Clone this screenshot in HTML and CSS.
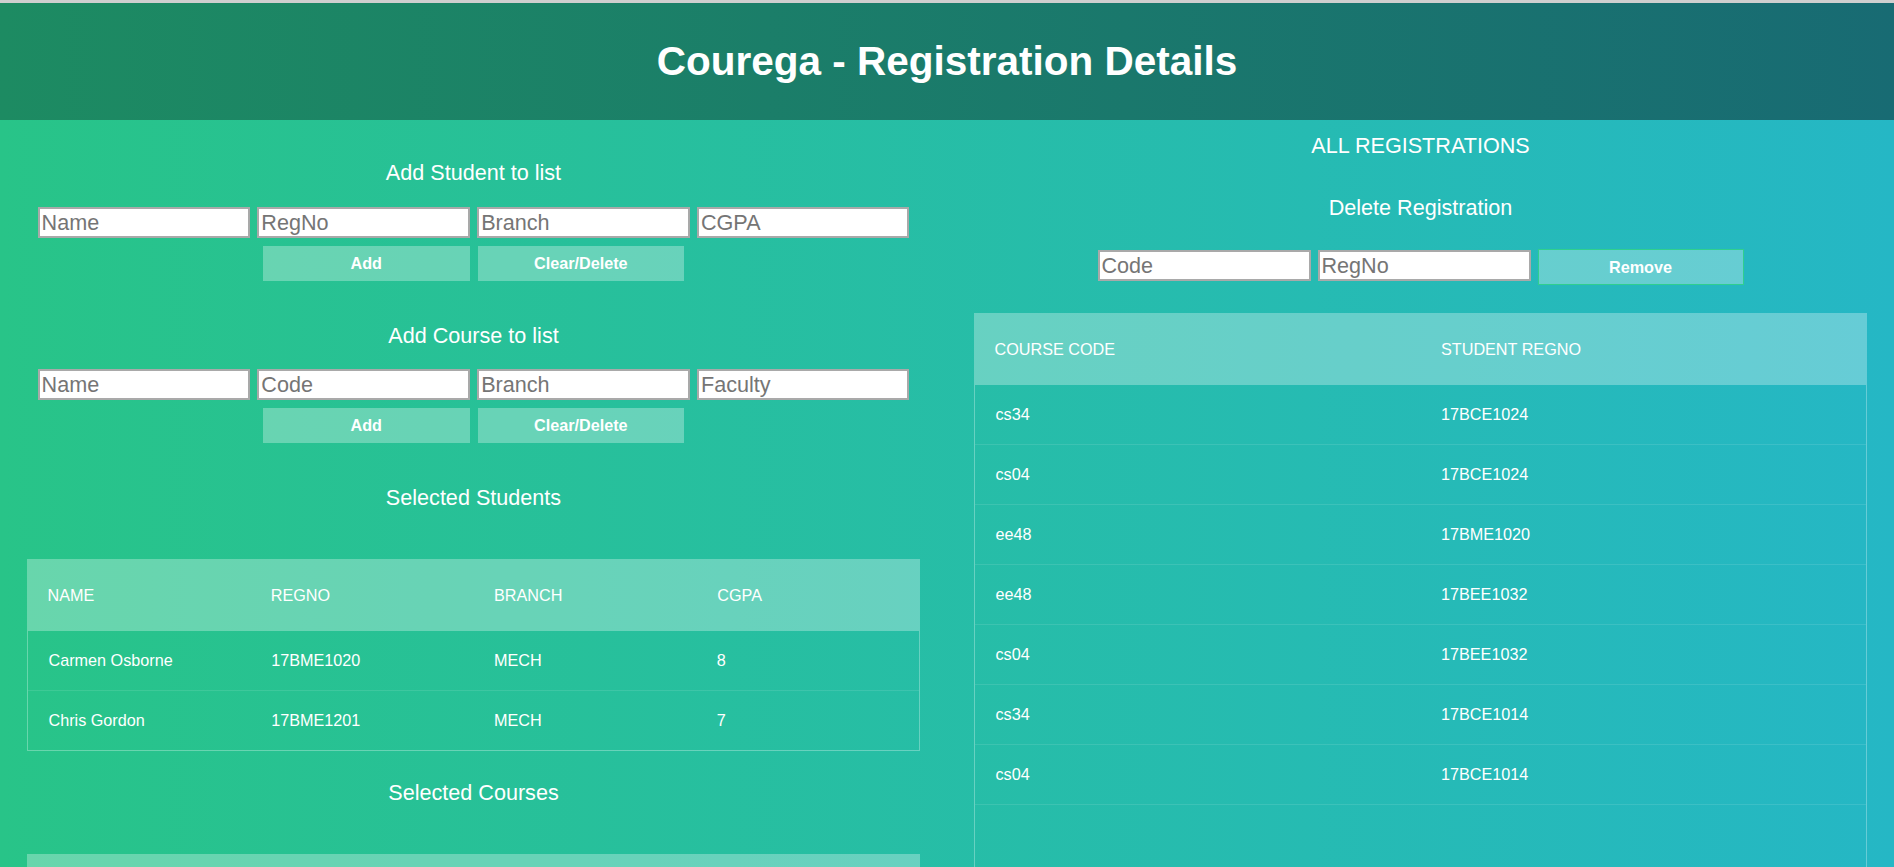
FILE: index.html
```html
<!DOCTYPE html>
<html lang="en">
<head>
<meta charset="utf-8">
<title>Courega - Registration Details</title>
<link rel="stylesheet" href="styles.css">
</head>
<body>
<header class="banner">
  <h1 class="banner-title">Courega - Registration Details</h1>
</header>
<main class="layout">
  <section class="col">
    <h2 class="sec-title first">Add Student to list</h2>
    <div class="field-row">
      <input class="field" type="text" placeholder="Name">
      <input class="field" type="text" placeholder="RegNo">
      <input class="field" type="text" placeholder="Branch">
      <input class="field" type="text" placeholder="CGPA">
    </div>
    <div class="btn-row">
      <button class="btn">Add</button>
      <button class="btn">Clear/Delete</button>
    </div>

    <h2 class="sec-title gap-lg">Add Course to list</h2>
    <div class="field-row row-second">
      <input class="field" type="text" placeholder="Name">
      <input class="field" type="text" placeholder="Code">
      <input class="field" type="text" placeholder="Branch">
      <input class="field" type="text" placeholder="Faculty">
    </div>
    <div class="btn-row">
      <button class="btn">Add</button>
      <button class="btn">Clear/Delete</button>
    </div>

    <h2 class="sec-title gap-lg">Selected Students</h2>
    <div class="tbl tbl-left">
      <div class="tbl-header">
        <table>
          <thead><tr><th>Name</th><th>RegNo</th><th>Branch</th><th>CGPA</th></tr></thead>
        </table>
      </div>
      <div class="tbl-content">
        <table>
          <tbody>
            <tr><td>Carmen Osborne</td><td>17BME1020</td><td>MECH</td><td>8</td></tr>
            <tr><td>Chris Gordon</td><td>17BME1201</td><td>MECH</td><td>7</td></tr>
          </tbody>
        </table>
      </div>
    </div>

    <h2 class="sec-title gap-sm">Selected Courses</h2>
    <div class="tbl tbl-left">
      <div class="tbl-header">
        <table>
          <thead><tr><th></th><th></th><th></th><th></th></tr></thead>
        </table>
      </div>
      <div class="tbl-content">
        <table><tbody></tbody></table>
      </div>
    </div>
  </section>

  <section class="col">
    <h2 class="sec-title all-title">ALL REGISTRATIONS</h2>
    <h2 class="sec-title del-title">Delete Registration</h2>
    <div class="field-row del-row">
      <input class="field field-del" type="text" placeholder="Code">
      <input class="field field-del" type="text" placeholder="RegNo">
      <button class="btn btn-remove">Remove</button>
    </div>
    <div class="tbl tbl-right">
      <div class="tbl-header">
        <table>
          <thead><tr><th>Course Code</th><th>Student RegNo</th></tr></thead>
        </table>
      </div>
      <div class="tbl-content tall">
        <table>
          <tbody>
            <tr><td>cs34</td><td>17BCE1024</td></tr>
            <tr><td>cs04</td><td>17BCE1024</td></tr>
            <tr><td>ee48</td><td>17BME1020</td></tr>
            <tr><td>ee48</td><td>17BEE1032</td></tr>
            <tr><td>cs04</td><td>17BEE1032</td></tr>
            <tr><td>cs34</td><td>17BCE1014</td></tr>
            <tr><td>cs04</td><td>17BCE1014</td></tr>
          </tbody>
        </table>
      </div>
    </div>
  </section>
</main>
</body>
</html>
```
FILE: styles.css
```css
html, body {
  margin: 0;
  padding: 0;
}

body {
  font-family: "Liberation Sans", Arial, sans-serif;
  color: #fff;
  background: linear-gradient(to right, #28c488, #25b7c5);
  min-height: 867px;
  overflow: hidden;
}

.banner {
  height: 117px;
  border-top: 3px solid #cfcfcf;
  background: linear-gradient(to right, #1d8b62, #186b73);
  display: flex;
  align-items: center;
  justify-content: center;
}

.banner-title {
  margin: 0;
  font-size: 40.5px;
  font-weight: bold;
  color: #fff;
  line-height: 46px;
  position: relative;
  top: -1px;
}

.layout {
  display: grid;
  grid-template-columns: 1fr 1fr;
}

.col {
  padding: 0 27px;
  display: flex;
  flex-direction: column;
  align-items: stretch;
}

.sec-title {
  margin: 0;
  font-size: 21.6px;
  font-weight: normal;
  line-height: 25px;
  text-align: center;
  color: #fff;
}

.sec-title.first { margin-top: 40px; }
.sec-title.gap-lg { margin-top: 42px; }
.sec-title.gap-sm { margin-top: 29px; }
.sec-title.all-title { margin-top: 13px; }
.sec-title.del-title { margin-top: 37px; }

.field-row {
  display: flex;
  justify-content: center;
  align-items: flex-start;
  gap: 7.3px;
  margin-top: 22px;
}

.field-row.row-second { margin-top: 21px; }

.field {
  box-sizing: border-box;
  width: 212.5px;
  height: 31px;
  margin: 0;
  padding: 1px 2px;
  border: 2px solid #a9a9a9;
  background: #fff;
  font-family: "Liberation Sans", Arial, sans-serif;
  font-size: 21.6px;
  color: #222;
  outline: none;
}

.field::placeholder {
  color: #757575;
}

.btn-row {
  display: flex;
  justify-content: center;
  gap: 8px;
  margin-top: 8px;
}

.btn {
  box-sizing: border-box;
  width: 206.5px;
  height: 35px;
  margin: 0;
  padding: 0;
  border: 0;
  background: rgba(255, 255, 255, 0.3);
  color: #fff;
  font-family: "Liberation Sans", Arial, sans-serif;
  font-size: 16.2px;
  font-weight: bold;
  cursor: pointer;
}

.del-row {
  margin-top: 29px;
  gap: 6.5px;
}

.field-del {
  width: 213.5px;
  margin-top: 1px;
}

.btn-remove {
  width: 206px;
  height: 36px;
  border: 1px solid #2fcf8e;
}

.tbl {
  margin-top: 49px;
}

.tbl-right {
  margin-top: 28px;
}

.tbl table {
  width: 100%;
  table-layout: fixed;
  border-collapse: collapse;
}

.tbl-header {
  background: rgba(255, 255, 255, 0.3);
}

.tbl th {
  height: 18px;
  padding: 27px 20.5px;
  line-height: 18px;
  text-align: left;
  font-weight: normal;
  font-size: 16.2px;
  text-transform: uppercase;
  color: #fff;
}

.tbl-content {
  border: 1px solid rgba(255, 255, 255, 0.3);
  border-top: 0;
}

.tbl-content.tall {
  height: 600px;
  overflow: hidden;
}

.tbl td {
  padding: 20px 20.5px;
  line-height: 19px;
  text-align: left;
  vertical-align: middle;
  font-size: 16.2px;
  color: #fff;
  border-bottom: 1px solid rgba(255, 255, 255, 0.1);
}

.tbl-left .tbl-content tbody tr:last-child td {
  border-bottom: 0;
}
```
